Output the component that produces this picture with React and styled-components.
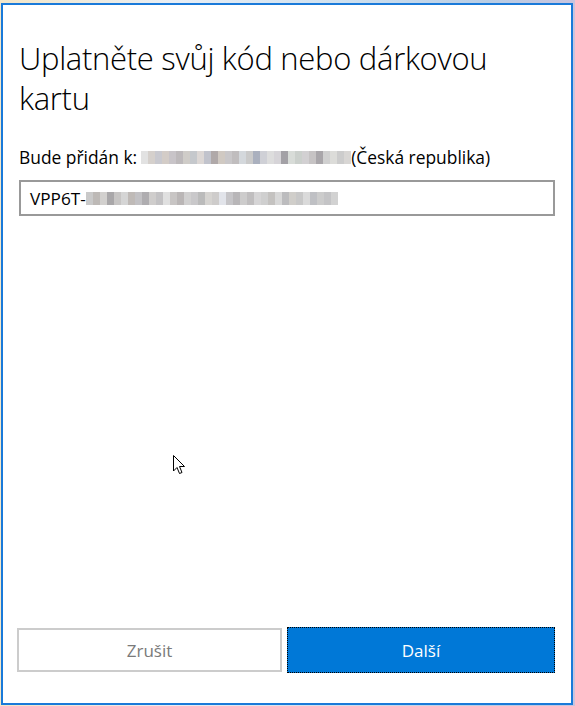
import React from "react";
import styled, { createGlobalStyle } from "styled-components";

const Global = createGlobalStyle`
  html, body { margin: 0; padding: 0; }
  body {
    width: 575px;
    height: 706px;
    overflow: hidden;
    font-family: "Open Sans", "Noto Sans", "Liberation Sans", sans-serif;
    background: linear-gradient(90deg, #f3e6c8 0%, #e9eef4 30%, #cfe0ee 60%, #b9cde4 85%, #c9c4de 100%);
  }
`;

const Desktop = styled.div`
  width: 575px;
  height: 706px;
  padding: 3px 0 0 1px;
  box-sizing: border-box;
  position: relative;
`;

const Window = styled.div`
  width: 572px;
  height: 702px;
  box-sizing: border-box;
  border: 2px solid #1a7ad9;
  background: #ffffff;
  display: flex;
  flex-direction: column;
  padding: 33px 16px 30px 14px;
`;

const Title = styled.h1`
  margin: 0;
  font-family: "Open Sans", "Noto Sans", sans-serif;
  font-weight: 300;
  font-size: 31px;
  line-height: 40px;
  color: #000;
  padding-left: 2px;
  max-width: 520px;
  letter-spacing: -0.3px;
`;

const Label = styled.div`
  margin-top: 28px;
  display: flex;
  align-items: center;
  font-size: 17.4px;
  line-height: 22px;
  color: #000;
  padding-left: 2px;
`;

const Blur = styled.span`
  display: inline-flex;
  height: ${(p) => p.$h || 12}px;
  margin-left: ${(p) => p.$ml ?? 4}px;
`;

const Pix = styled.span`
  width: 7px;
  height: 100%;
  display: block;
`;

const Input = styled.div`
  margin-top: 12px;
  margin-left: 2px;
  height: 36px;
  box-sizing: border-box;
  border: 2px solid #999999;
  display: flex;
  align-items: center;
  padding-left: 9px;
  font-size: 17.2px;
  color: #000;
`;

const Spacer = styled.div`
  flex: 1;
`;

const Buttons = styled.div`
  display: flex;
  gap: 5px;
  align-items: center;
`;

const Button = styled.button`
  width: ${(p) => p.$w}px;
  height: ${(p) => (p.$primary ? 46 : 44)}px;
  box-sizing: border-box;
  font-family: "Open Sans", "Noto Sans", sans-serif;
  font-size: 17px;
  cursor: default;
  border: ${(p) => (p.$primary ? "1px dotted #000" : "2px solid #cccccc")};
  background: ${(p) => (p.$primary ? "#0078d7" : "#ffffff")};
  color: ${(p) => (p.$primary ? "#ffffff" : "#7a7a7a")};
  padding: 0;
  outline: none;
`;

const Cursor = styled.svg`
  position: absolute;
  left: 173px;
  top: 455px;
`;

const emailColors = [
  "#e2e2e2","#d5d0cc","#c9c9cf","#d3ccc7","#c8c4c8","#bdb9bb","#cfccc8","#c5c8cc","#dcd7d5","#c1c3cc","#b0a9a9","#d0c9c2","#c9c7c9","#c0bdbe","#d4d8dc","#cacaca","#aab0be","#cfd0d6","#dddddd","#d6d4d8","#a3a1a6","#d8dcd8","#cbd0cc","#d2d0d2","#c6c3c4","#a9a6aa","#d0d0d0","#dcdcd9","#cccccc","#d8d6d4",
];
const codeColors = [
  "#c9c9c9","#bdb9b6","#d2d0ce","#a9a7a9","#c7c5c4","#d5d5d5","#bfbab7","#c2c1c4","#afadb0","#cfcdcc","#c3c2c4","#e0e0e0","#c8c5c4","#bab6b6","#d1d0d0","#c9c8ca","#bbbbbb","#d6d4d1","#cecccb","#e2e4ea","#c6c5c8","#b8b6b8","#cdcccc","#c0bebf","#d6d5d6","#cfcfcf","#c4c2c0","#d8d8d8","#bcbcbe","#d0ceca","#c8c8c8","#dadada","#bfc0c4","#cccccc","#c4c4c6","#d2d2d2",
];

export default function App() {
  return (
    <>
      <Global />
      <Desktop>
        <Window>
          <Title>Uplatněte svůj kód nebo dárkovou kartu</Title>
          <Label>
            Bude přidán k:
            <Blur $h={13}>
              {emailColors.map((c, i) => (
                <Pix key={i} style={{ background: c }} />
              ))}
            </Blur>
            (Česká republika)
          </Label>
          <Input>
            VPP6T-
            <Blur $ml={0} $h={13}>
              {codeColors.map((c, i) => (
                <Pix key={i} style={{ background: c }} />
              ))}
            </Blur>
          </Input>
          <Spacer />
          <Buttons>
            <Button $w={265}>Zrušit</Button>
            <Button $w={268} $primary>Další</Button>
          </Buttons>
        </Window>
        <Cursor width="13" height="20" viewBox="0 0 13 20">
          <path d="M0.5 0.5 L0.5 16 L4 12.5 L6.5 18.5 L9 17.5 L6.5 11.5 L11.5 11.5 Z" fill="#fff" stroke="#000" strokeWidth="1" />
        </Cursor>
      </Desktop>
    </>
  );
}
